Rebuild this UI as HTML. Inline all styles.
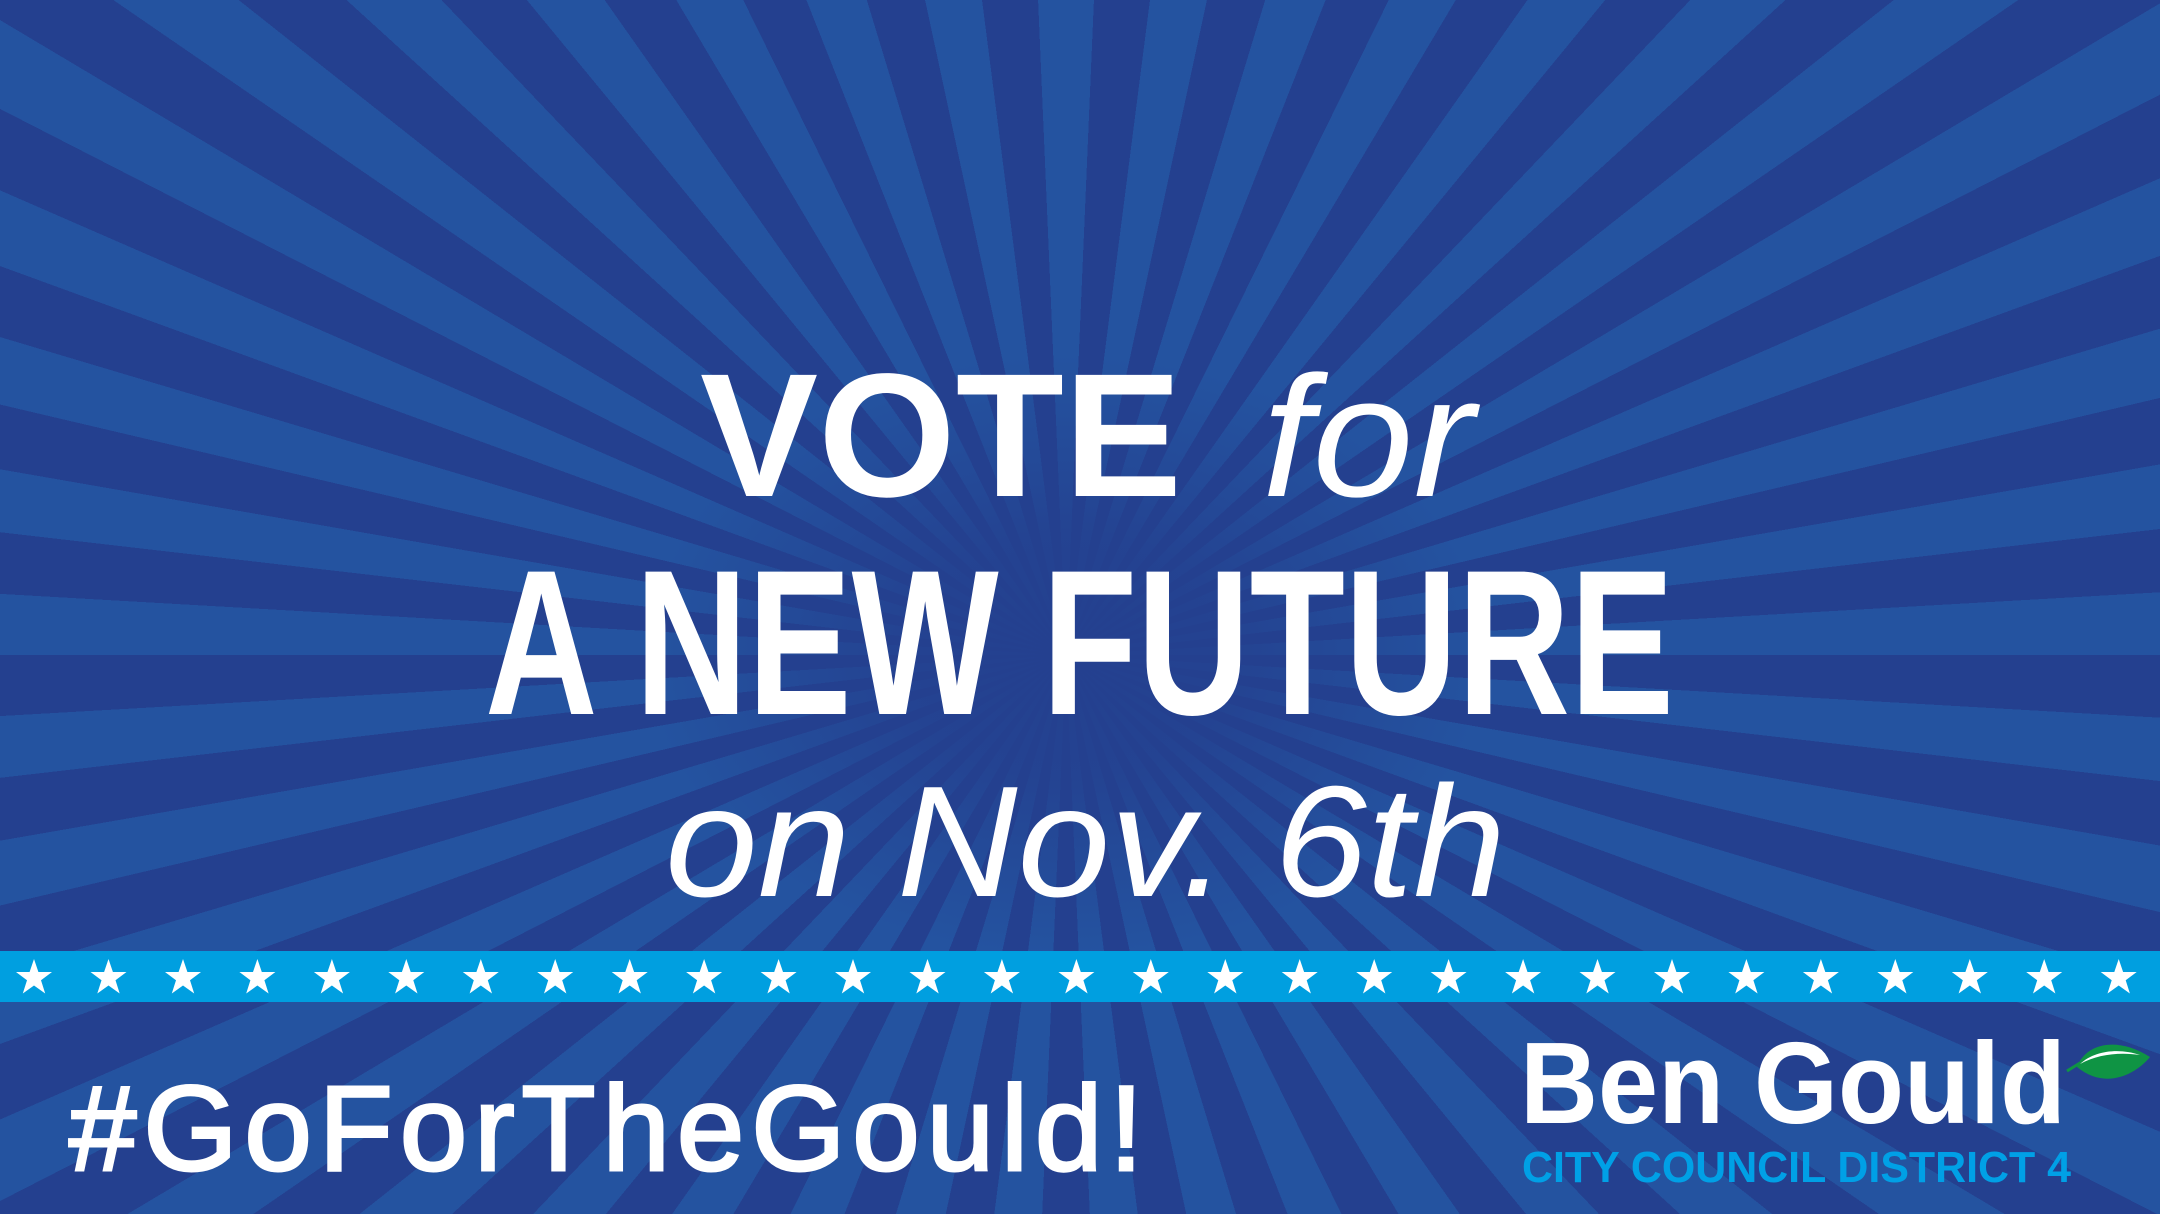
<!DOCTYPE html>
<html><head><meta charset="utf-8"><style>
html,body{margin:0;padding:0;width:2160px;height:1214px;overflow:hidden;}
body{position:relative;background:#24408f;}
#wrap{position:absolute;left:0;top:0;width:2160px;height:1214px;overflow:hidden;contain:strict;clip-path:inset(0);}
#burst{position:absolute;left:-434px;top:-845px;width:3000px;height:3000px;
transform:scaleX(1.22);transform-origin:1500px 1500px;
background:repeating-conic-gradient(from -2deg at 50% 50%,#2453a0 0deg 4deg,#24408f 4deg 8deg);}
#vig{position:absolute;left:0;top:0;width:2160px;height:1214px;
background:radial-gradient(ellipse 420px 300px at 1066px 655px,#24408f 0%,rgba(36,64,143,0.85) 40%,rgba(36,64,143,0) 100%);}
svg{position:absolute;left:0;top:0;}
</style></head><body>
<div id="wrap"><div id="burst"></div><div id="vig"></div></div>
<svg width="2160" height="1214" viewBox="0 0 2160 1214" xmlns="http://www.w3.org/2000/svg">
<defs>
<polygon id="st" points="0,-19 4.4,-6 18,-6 7,2.3 11.2,15.5 0,7.5 -11.2,15.5 -7,2.3 -18,-6 -4.4,-6" fill="#fff"/>
</defs>
<rect x="0" y="951" width="2160" height="51" fill="#009fe0"/>
<g transform="translate(0,978)">
<use href="#st" x="34"/><use href="#st" x="108.5"/><use href="#st" x="183"/><use href="#st" x="257.4"/><use href="#st" x="331.9"/><use href="#st" x="406.3"/><use href="#st" x="480.8"/><use href="#st" x="555.2"/><use href="#st" x="629.7"/><use href="#st" x="704.1"/><use href="#st" x="778.6"/><use href="#st" x="853"/><use href="#st" x="927.5"/><use href="#st" x="1001.9"/><use href="#st" x="1076.4"/><use href="#st" x="1150.8"/><use href="#st" x="1225.3"/><use href="#st" x="1299.7"/><use href="#st" x="1374.2"/><use href="#st" x="1448.6"/><use href="#st" x="1523.1"/><use href="#st" x="1597.5"/><use href="#st" x="1672"/><use href="#st" x="1746.4"/><use href="#st" x="1820.9"/><use href="#st" x="1895.3"/><use href="#st" x="1969.8"/><use href="#st" x="2044.2"/><use href="#st" x="2118.7"/>
</g>
<g fill="#fff" font-family="Liberation Sans, sans-serif">
<text x="700" y="496" font-size="176" font-weight="bold" textLength="482" lengthAdjust="spacingAndGlyphs">VOTE</text>
<text x="1262" y="496" font-size="172" font-style="italic" textLength="212" lengthAdjust="spacingAndGlyphs">for</text>
<text x="485" y="714" font-size="207" font-weight="bold" textLength="1189" lengthAdjust="spacingAndGlyphs">A NEW FUTURE</text>
<text x="665" y="896" font-size="158" font-style="italic" textLength="841" lengthAdjust="spacingAndGlyphs">on Nov. 6th</text>
<text x="69" y="1170" font-size="121" stroke="#fff" stroke-width="3" textLength="1074" lengthAdjust="spacing">#GoForTheGould!</text>
<text x="1520" y="1123" font-size="116" font-weight="bold" textLength="546" lengthAdjust="spacingAndGlyphs">Ben Gould</text>
</g>
<text x="1522" y="1182" fill="#00a0e6" font-family="Liberation Sans Narrow, Liberation Sans, sans-serif" font-size="44" font-weight="bold" textLength="549" lengthAdjust="spacingAndGlyphs">CITY COUNCIL DISTRICT 4</text>
<path d="M2067,1071 L2080,1063" stroke="#0f9444" stroke-width="3"/>
<path d="M2077,1067 C2085,1045 2115,1035 2150,1057 C2135,1075 2105,1090 2077,1067 Z" fill="#0f9444"/>
<path d="M2080,1064 C2095,1050 2120,1048 2140,1055 C2120,1052 2098,1054 2080,1064 Z" fill="#fff"/>
</svg>
</body></html>
